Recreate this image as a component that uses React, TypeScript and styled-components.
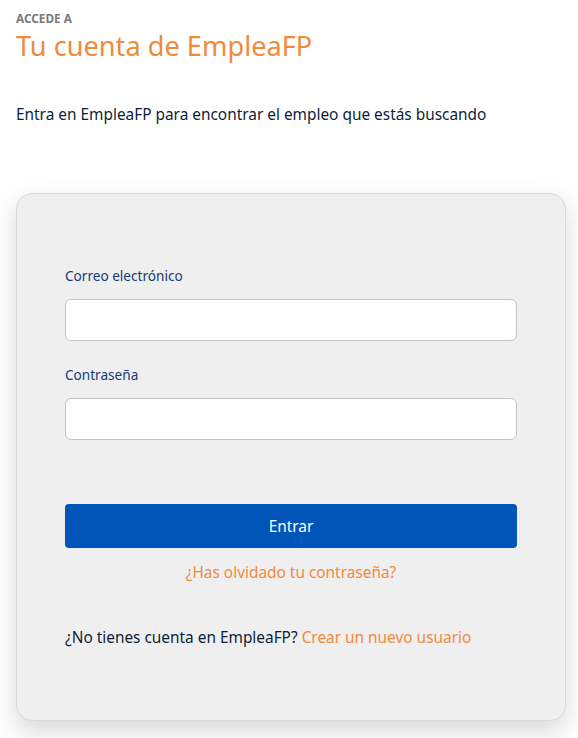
import styled, { createGlobalStyle } from 'styled-components';

const GlobalStyle = createGlobalStyle`
  html, body {
    margin: 0;
    padding: 0;
    background: #ffffff;
    font-family: "Noto Sans", "Open Sans", sans-serif;
  }
`;

const Page = styled.div`
  padding: 10px 12px 18px 16px;
`;

const Eyebrow = styled.div`
  font-size: 11.8px;
  font-weight: 700;
  color: #7a7a7a;
  line-height: 16px;
`;

const Title = styled.h1`
  margin: 2px 0 0;
  font-size: 27.2px;
  font-weight: 400;
  line-height: 36px;
  color: #f08a3c;
`;

const Lead = styled.p`
  margin: 40px 0 0;
  font-size: 15.4px;
  line-height: 22px;
  color: #0d1d3a;
`;

const Card = styled.form`
  margin-top: 67px;
  width: 550px;
  box-sizing: border-box;
  padding: 73px 48px 71px;
  background: #efefef;
  border: 1px solid #d9d9d9;
  border-radius: 16px;
  box-shadow: 0 10px 24px rgba(0, 0, 0, 0.16);
  display: flex;
  flex-direction: column;
`;

const Field = styled.div`
  display: flex;
  flex-direction: column;
  gap: 14px;
  margin-bottom: 25px;
`;

const Label = styled.label`
  font-size: 13.6px;
  line-height: 18px;
  color: #123c77;
`;

const Input = styled.input`
  height: 42px;
  box-sizing: border-box;
  border: 1px solid #c4c4c4;
  border-radius: 6px;
  background: #ffffff;
  font-family: inherit;
  font-size: 15px;
  padding: 0 12px;
`;

const Submit = styled.button`
  margin-top: 39px;
  height: 44px;
  border: none;
  border-radius: 4px;
  background: #0055b8;
  color: #ffffff;
  font-family: inherit;
  font-size: 15.4px;
  cursor: pointer;
`;

const Forgot = styled.a`
  margin-top: 14px;
  align-self: center;
  font-size: 15.4px;
  line-height: 22px;
  color: #f08a3c;
  text-decoration: none;
`;

const SignUp = styled.p`
  margin: 43px 0 0;
  font-size: 15.4px;
  line-height: 22px;
  color: #0d1d3a;
`;

const Accent = styled.a`
  color: #f08a3c;
  text-decoration: none;
`;

export default function App() {
  return (
    <>
      <GlobalStyle />
      <Page>
        <Eyebrow>ACCEDE A</Eyebrow>
        <Title>Tu cuenta de EmpleaFP</Title>
        <Lead>Entra en EmpleaFP para encontrar el empleo que estás buscando</Lead>
        <Card onSubmit={e => e.preventDefault()}>
          <Field>
            <Label htmlFor="email">Correo electrónico</Label>
            <Input id="email" type="email" />
          </Field>
          <Field>
            <Label htmlFor="password">Contraseña</Label>
            <Input id="password" type="password" />
          </Field>
          <Submit type="submit">Entrar</Submit>
          <Forgot href="#">¿Has olvidado tu contraseña?</Forgot>
          <SignUp>
            ¿No tienes cuenta en EmpleaFP? <Accent href="#">Crear un nuevo usuario</Accent>
          </SignUp>
        </Card>
      </Page>
    </>
  );
}
